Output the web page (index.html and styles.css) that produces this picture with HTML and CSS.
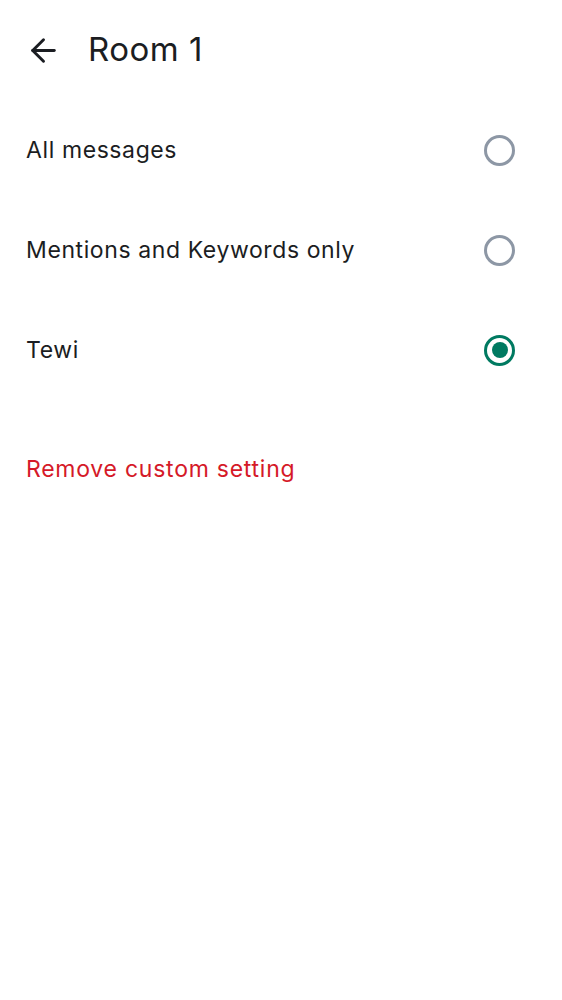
FILE: index.html
```html
<!DOCTYPE html>
<html lang="en">
<head>
<meta charset="utf-8">
<title>Room 1</title>
<link rel="stylesheet" href="styles.css">
</head>
<body>
<header class="topbar">
  <button class="back" aria-label="Back">
    <svg width="37" height="37" viewBox="0 0 24 24" fill="none" stroke="#1b1d22" stroke-width="1.9" stroke-linecap="round" stroke-linejoin="round"><path d="M19 12H5"/><path d="M12 19l-7-7 7-7"/></svg>
  </button>
  <h1 class="title">Room 1</h1>
</header>
<main class="list">
  <label class="row">
    <span class="label">All messages</span>
    <span class="radio"></span>
  </label>
  <label class="row">
    <span class="label">Mentions and Keywords only</span>
    <span class="radio"></span>
  </label>
  <label class="row">
    <span class="label">Tewi</span>
    <span class="radio checked"></span>
  </label>
  <div class="remove">Remove custom setting</div>
</main>
</body>
</html>
```
FILE: styles.css
```css
* { box-sizing: border-box; }
body {
  margin: 0;
  background: #fff;
  font-family: Inter, Roboto, "Noto Sans", sans-serif;
  color: #1b1d22;
}
.topbar {
  height: 100px;
  display: flex;
  align-items: center;
  padding-left: 25px;
}
.back {
  border: 0;
  background: none;
  padding: 0;
  width: 37px;
  height: 37px;
  display: flex;
}
.title {
  margin: -2px 0 0 26px;
  font-size: 33px;
  font-weight: 400;
  letter-spacing: 0.5px;
}
.row {
  height: 100px;
  display: flex;
  align-items: center;
  justify-content: space-between;
  padding: 0 47px 0 26px;
}
.label {
  font-size: 23px;
  letter-spacing: 0.6px;
}
.radio {
  width: 31px;
  height: 31px;
  border-radius: 50%;
  border: 3px solid #8d97a5;
  display: flex;
  align-items: center;
  justify-content: center;
}
.radio.checked {
  border-color: #007a61;
}
.radio.checked::after {
  content: "";
  width: 16px;
  height: 16px;
  border-radius: 50%;
  background: #007a61;
}
.remove {
  margin-top: 19px;
  padding-left: 26px;
  height: 100px;
  display: flex;
  align-items: center;
  font-size: 23px;
  letter-spacing: 0.75px;
  color: #d51928;
}
```
